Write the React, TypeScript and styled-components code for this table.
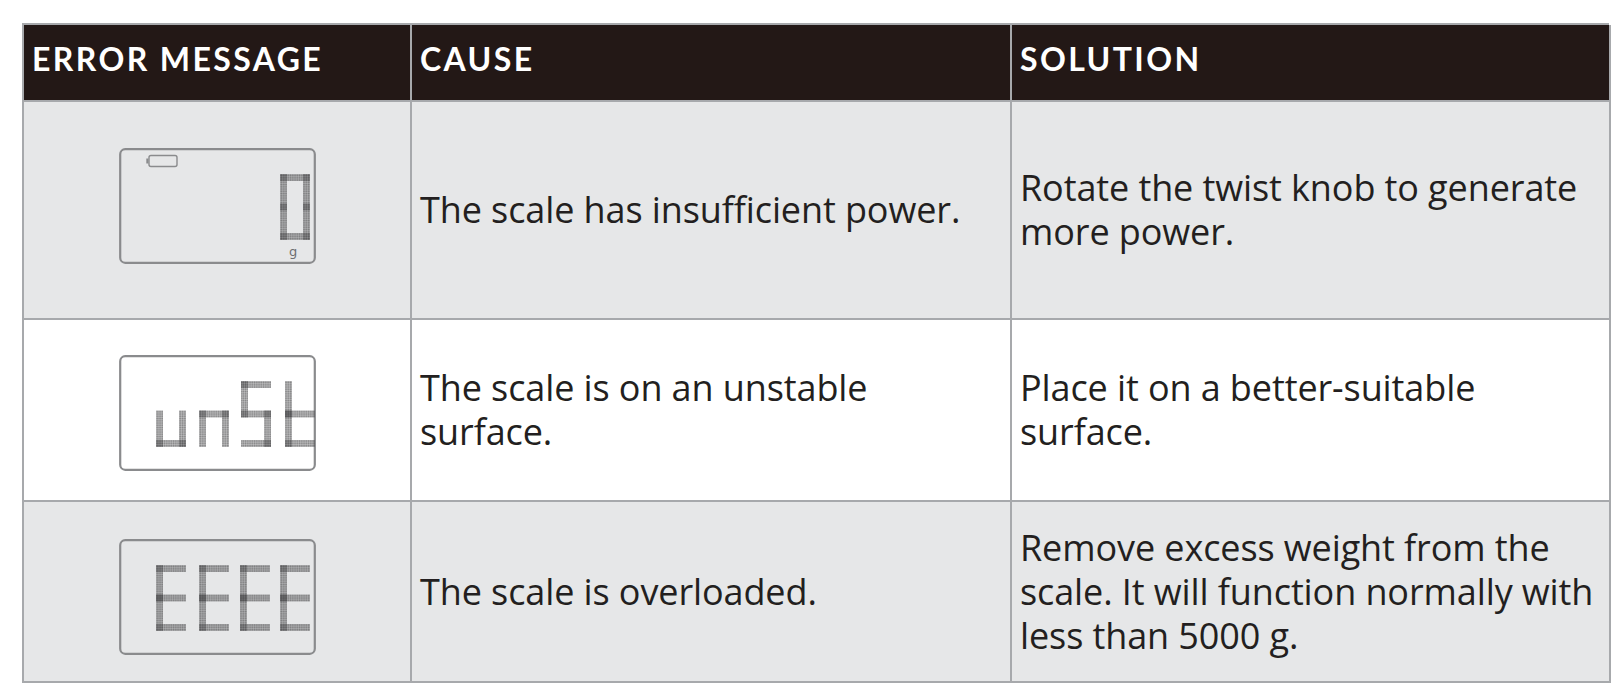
import React from "react";
import styled, { createGlobalStyle } from "styled-components";

const GlobalStyle = createGlobalStyle`
  html, body {
    margin: 0;
    padding: 0;
    background: #ffffff;
  }
  body {
    font-family: "Open Sans", Lato, sans-serif;
    color: #231f20;
  }
`;

const Page = styled.div`
  padding: 23px 22px;
`;

const Table = styled.div`
  display: grid;
  grid-template-columns: 388px 600px 599px;
  grid-template-rows: 77px 218px 182px 181px;
  width: 1587px;
  border-top: 2px solid #a7a9ac;
  border-left: 2px solid #a7a9ac;
  box-sizing: border-box;
`;

const HeadCell = styled.div`
  background: #231816;
  color: #ffffff;
  font-family: Lato, "Open Sans", sans-serif;
  font-weight: 700;
  font-size: 32px;
  letter-spacing: 2.4px;
  display: flex;
  align-items: center;
  padding: 0 8px 8px;
  border-right: 2px solid #a7a9ac;
  border-bottom: 2px solid #a7a9ac;
`;

const Cell = styled.div<{ $shade: boolean }>`
  background: ${(p) => (p.$shade ? "#e6e7e8" : "#ffffff")};
  display: flex;
  align-items: center;
  padding: 0 4px 0 8px;
  font-size: 36px;
  line-height: 44px;
  letter-spacing: -0.1px;
  border-right: 2px solid #a7a9ac;
  border-bottom: 2px solid #a7a9ac;
`;

const DisplayCell = styled(Cell)<{ $shift: number }>`
  justify-content: center;
  padding: ${(p) => (p.$shift < 0 ? `0 0 ${-p.$shift * 2}px` : `${p.$shift * 2}px 0 0`)};
`;

const Lcd = styled.svg`
  display: block;
  width: 197px;
  height: 116px;
`;

type Seg = "a" | "b" | "c" | "d" | "e" | "f" | "g";

const glyphs: Record<string, Seg[]> = {
  "0": ["a", "b", "c", "d", "e", "f"],
  u: ["c", "d", "e"],
  n: ["c", "e", "g"],
  S: ["a", "f", "g", "c", "d"],
  t: ["f", "e", "g", "d"],
  E: ["a", "f", "g", "e", "d"],
};

const W = 30;
const H = 66;
const T = 7;

function segRect(s: Seg, x: number, y: number) {
  const half = H / 2;
  switch (s) {
    case "a":
      return { x, y, w: W, h: T };
    case "b":
      return { x: x + W - T, y, w: T, h: half + T / 2 };
    case "c":
      return { x: x + W - T, y: y + half - T / 2, w: T, h: half + T / 2 };
    case "d":
      return { x, y: y + H - T, w: W, h: T };
    case "e":
      return { x, y: y + half - T / 2, w: T, h: half + T / 2 };
    case "f":
      return { x, y, w: T, h: half + T / 2 };
    case "g":
      return { x, y: y + half - T / 2, w: W, h: T };
  }
}

function Digit({ ch, x, y, fill }: { ch: string; x: number; y: number; fill: string }) {
  return (
    <g>
      {glyphs[ch].map((s) => {
        const r = segRect(s, x, y);
        return <rect key={s} x={r.x} y={r.y} width={r.w} height={r.h} fill={fill} />;
      })}
    </g>
  );
}

function Display({ id, chars, xs, battery }: { id: string; chars: string; xs: number[]; battery?: boolean }) {
  const fill = `url(#dots-${id})`;
  return (
    <Lcd viewBox="0 0 197 116">
      <defs>
        <pattern id={`dots-${id}`} width="1.8" height="1.8" patternUnits="userSpaceOnUse">
          <rect x="0.15" y="0.15" width="1.3" height="1.3" fill="#4d4d4f" />
        </pattern>
      </defs>
      <rect x="1.2" y="1.2" width="194.6" height="113.6" rx="5" fill="none" stroke="#8a8b8d" strokeWidth="2.2" />
      {battery && (
        <g>
          <rect x="30" y="7.5" width="28" height="11" rx="2" fill="none" stroke="#8a8b8d" strokeWidth="1.4" />
          <rect x="27.3" y="10.5" width="2.2" height="5" fill="#8a8b8d" />
        </g>
      )}
      {chars.split("").map((c, i) => (
        <Digit key={i} ch={c} x={xs[i]} y={26} fill={fill} />
      ))}
      {battery && (
        <text x="174" y="108" fontSize="13" fill="#6d6e71" textAnchor="middle" fontFamily="DejaVu Sans, sans-serif">
          g
        </text>
      )}
    </Lcd>
  );
}

const rows = [
  {
    id: "power",
    chars: "0",
    xs: [161],
    battery: true,
    shift: -4,
    cause: "The scale has insufficient power.",
    solution: "Rotate the twist knob to generate more power.",
  },
  {
    id: "unstable",
    chars: "unSt",
    xs: [37, 80, 122, 166],
    battery: false,
    shift: 3,
    cause: "The scale is on an unstable surface.",
    solution: "Place it on a better-suitable surface.",
  },
  {
    id: "overload",
    chars: "EEEE",
    xs: [37, 80, 121, 161],
    battery: false,
    shift: 5,
    cause: "The scale is overloaded.",
    solution: "Remove excess weight from the scale. It will function normally with less than 5000 g.",
  },
];

export default function App() {
  return (
    <Page>
      <GlobalStyle />
      <Table>
        <HeadCell>ERROR MESSAGE</HeadCell>
        <HeadCell>CAUSE</HeadCell>
        <HeadCell>SOLUTION</HeadCell>
        {rows.map((r, i) => {
          const shade = i % 2 === 0;
          return (
            <React.Fragment key={r.id}>
              <DisplayCell $shade={shade} $shift={r.shift}>
                <Display id={r.id} chars={r.chars} xs={r.xs} battery={r.battery} />
              </DisplayCell>
              <Cell $shade={shade}>{r.cause}</Cell>
              <Cell $shade={shade}>{r.solution}</Cell>
            </React.Fragment>
          );
        })}
      </Table>
    </Page>
  );
}
